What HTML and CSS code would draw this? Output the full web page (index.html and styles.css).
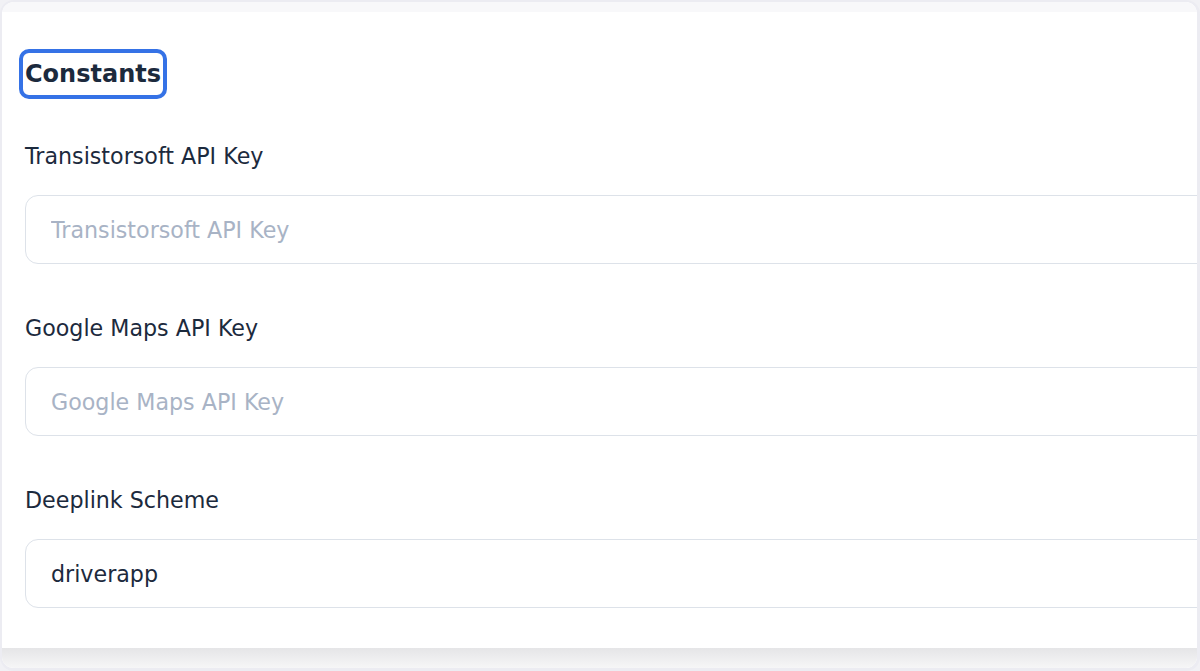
FILE: index.html
```html
<!DOCTYPE html>
<html lang="en">
<head>
<meta charset="utf-8">
<title>Constants</title>
<link rel="stylesheet" href="styles.css">
</head>
<body>
<div class="frame">
  <div class="topband"></div>
  <section class="content">
    <h2 class="title"><span class="title-box">Constants</span></h2>
    <div class="field">
      <label class="label" for="ts">Transistorsoft API Key</label>
      <input class="input" id="ts" type="text" placeholder="Transistorsoft API Key">
    </div>
    <div class="field">
      <label class="label" for="gm">Google Maps API Key</label>
      <input class="input" id="gm" type="text" placeholder="Google Maps API Key">
    </div>
    <div class="field">
      <label class="label" for="dl">Deeplink Scheme</label>
      <input class="input" id="dl" type="text" value="driverapp">
    </div>
  </section>
  <div class="footband"></div>
</div>
</body>
</html>
```
FILE: styles.css
```css
* { box-sizing: border-box; }
html, body { margin: 0; padding: 0; }
body {
  background: #f1f1f5;
  font-family: "DejaVu Sans", Inter, sans-serif;
  color: #1e293b;
  width: 1200px;
  height: 671px;
  overflow: hidden;
}
.frame {
  height: 671px;
  border: 2px solid #ececf2;
  border-right-width: 3px;
  border-bottom-width: 3px;
  border-radius: 14px;
  background: #ffffff;
  overflow: hidden;
  display: flex;
  flex-direction: column;
}
.topband {
  height: 10px;
  flex: none;
  background: #f8f8fa;
}
.content {
  flex: 1;
  min-height: 0;
  overflow: hidden;
  padding: 37px 0 0 23px;
}
.title {
  margin: 0 0 42px -6px;
  font-size: 24px;
  font-weight: 700;
  line-height: 42px;
  height: 50px;
}
.title-box {
  display: inline-block;
  border: 4px solid #3572e6;
  border-radius: 10px;
  padding: 0 2px;
  color: #1c2a3d;
}
.field {
  display: flex;
  flex-direction: column;
  margin-bottom: 49px;
}
.field:last-child { margin-bottom: 0; }
.label {
  font-size: 22.2px;
  line-height: 30px;
  height: 30px;
  margin-bottom: 24px;
  color: #1c2a3d;
}
.input {
  width: 1200px;
  height: 69px;
  border: 1px solid #dde2e9;
  border-radius: 13px;
  padding: 0 0 0 25px;
  font-family: inherit;
  font-size: 22.2px;
  color: #1c2a3d;
  background: #fff;
  outline: none;
}
.input::placeholder { color: #a8b3c5; }
.footband {
  height: 20px;
  flex: none;
  background: linear-gradient(#e5e5e7, #f6f6f7);
}
```
